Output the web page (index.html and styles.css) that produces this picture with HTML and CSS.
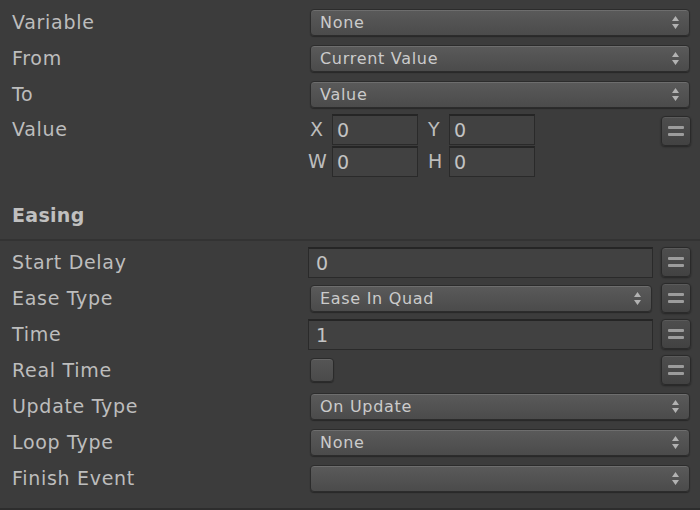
FILE: index.html
```html
<!DOCTYPE html>
<html>
<head>
<meta charset="utf-8">
<link rel="stylesheet" href="styles.css">
</head>
<body>
<div class="panel">
  <div class="rows top">
    <div class="row">
      <div class="label">Variable</div>
      <div class="popup"><span class="ptext">None</span><svg class="arrows" viewBox="0 0 7 13"><path d="M3.5 0L7 5H0Z M0 8H7L3.5 13Z"/></svg></div>
    </div>
    <div class="row">
      <div class="label">From</div>
      <div class="popup"><span class="ptext">Current Value</span><svg class="arrows" viewBox="0 0 7 13"><path d="M3.5 0L7 5H0Z M0 8H7L3.5 13Z"/></svg></div>
    </div>
    <div class="row">
      <div class="label">To</div>
      <div class="popup"><span class="ptext">Value</span><svg class="arrows" viewBox="0 0 7 13"><path d="M3.5 0L7 5H0Z M0 8H7L3.5 13Z"/></svg></div>
    </div>
    <div class="vrow">
      <div class="label vlabel">Value</div>
      <div class="vgrid">
        <span class="axis">X</span><div class="field small">0</div>
        <span class="axis">Y</span><div class="field small">0</div>
        <span class="axis">W</span><div class="field small">0</div>
        <span class="axis">H</span><div class="field small">0</div>
      </div>
      <div class="eqbtn vbtn"><i></i><i></i></div>
    </div>
  </div>
  <div class="header">Easing</div>
  <div class="rows bottom">
    <div class="row">
      <div class="label">Start Delay</div>
      <div class="field wide">0</div>
      <div class="eqbtn"><i></i><i></i></div>
    </div>
    <div class="row">
      <div class="label">Ease Type</div>
      <div class="popup short"><span class="ptext">Ease In Quad</span><svg class="arrows" viewBox="0 0 7 13"><path d="M3.5 0L7 5H0Z M0 8H7L3.5 13Z"/></svg></div>
      <div class="eqbtn"><i></i><i></i></div>
    </div>
    <div class="row">
      <div class="label">Time</div>
      <div class="field wide">1</div>
      <div class="eqbtn"><i></i><i></i></div>
    </div>
    <div class="row">
      <div class="label">Real Time</div>
      <div class="check-wrap"><div class="check"></div></div>
      <div class="eqbtn"><i></i><i></i></div>
    </div>
    <div class="row">
      <div class="label">Update Type</div>
      <div class="popup"><span class="ptext">On Update</span><svg class="arrows" viewBox="0 0 7 13"><path d="M3.5 0L7 5H0Z M0 8H7L3.5 13Z"/></svg></div>
    </div>
    <div class="row">
      <div class="label">Loop Type</div>
      <div class="popup"><span class="ptext">None</span><svg class="arrows" viewBox="0 0 7 13"><path d="M3.5 0L7 5H0Z M0 8H7L3.5 13Z"/></svg></div>
    </div>
    <div class="row">
      <div class="label">Finish Event</div>
      <div class="popup"><span class="ptext"></span><svg class="arrows" viewBox="0 0 7 13"><path d="M3.5 0L7 5H0Z M0 8H7L3.5 13Z"/></svg></div>
    </div>
  </div>
</div>
</body>
</html>
```
FILE: styles.css
```css
html, body {
  margin: 0;
  padding: 0;
  background: #3c3c3c;
}
body {
  width: 700px;
  height: 510px;
  overflow: hidden;
  font-family: "DejaVu Sans", "Liberation Sans", sans-serif;
  color: #c3c3c3;
}
.panel {
  height: 508px;
  border-bottom: 2px solid #2d2d2d;
  box-sizing: content-box;
}
.rows.top {
  padding-top: 4px;
}
.row {
  height: 36px;
  display: flex;
  align-items: center;
  padding: 0 9px 0 12px;
}
.label {
  width: 296px;
  flex: none;
  font-size: 19px;
  letter-spacing: 0.7px;
  color: #bdbdbd;
}
.popup {
  flex: 1;
  margin-left: 2px;
  margin-right: 1px;
  height: 25px;
  display: flex;
  align-items: center;
  justify-content: space-between;
  padding: 0 10px 0 9px;
  background: linear-gradient(#5a5a5a, #4b4b4b);
  border: 1px solid #2c2c2c;
  border-radius: 4px;
  box-shadow: inset 0 1px 0 rgba(255,255,255,0.12), 0 1px 1px rgba(0,0,0,0.35);
}
.popup.short {
  margin-right: 1px;
}
.ptext {
  font-size: 16px;
  letter-spacing: 0.7px;
  color: #cbcbcb;
}
.arrows {
  width: 7px;
  height: 13px;
  fill: #b2b2b2;
}
.field {
  height: 28px;
  background: #414141;
  border: 1px solid #2a2a2a;
  border-top: 2px solid #252525;
  box-sizing: content-box;
  font-size: 19px;
  color: #c3c3c3;
  display: flex;
  align-items: center;
  padding-left: 7px;
}
.field.wide {
  flex: 1;
}
.eqbtn {
  width: 28px;
  height: 28px;
  margin-left: 8px;
  flex: none;
  border: 1px solid #2a2a2a;
  border-radius: 4px;
  background: linear-gradient(#4e4e4e, #424242);
  box-shadow: inset 0 1px 0 rgba(255,255,255,0.08), 0 1px 2px rgba(0,0,0,0.4);
  display: flex;
  flex-direction: column;
  align-items: center;
  justify-content: center;
  gap: 4px;
}
.eqbtn i {
  display: block;
  width: 16px;
  height: 3px;
  border-radius: 1px;
  background: #9c9c9c;
}
.check-wrap {
  flex: 1;
  padding-left: 2px;
}
.check {
  width: 22px;
  height: 22px;
  border: 1px solid #2b2b2b;
  border-radius: 4px;
  background: linear-gradient(#555555, #4a4a4a);
  box-shadow: inset 0 1px 0 rgba(255,255,255,0.1), 0 1px 1px rgba(0,0,0,0.35);
}
.vrow {
  height: 64px;
  padding: 2px 9px 0 12px;
  display: flex;
  align-items: flex-start;
}
.vlabel {
  line-height: 31px;
}
.vgrid {
  display: grid;
  grid-template-columns: 24px 86px 31px 86px;
  grid-auto-rows: 31px;
  row-gap: 1px;
  flex: none;
}
.axis {
  font-size: 19px;
  color: #bdbdbd;
  line-height: 31px;
  padding-left: 2px;
}
.axis:nth-child(5) {
  padding-left: 0;
}
.axis:nth-child(3), .axis:nth-child(7) {
  padding-left: 10px;
}
.field.small {
  height: 28px;
  padding-left: 4px;
  box-sizing: content-box;
  width: auto;
}
.vbtn {
  margin-left: auto;
  margin-top: 2px;
}
.header {
  height: 63px;
  box-sizing: border-box;
  border-bottom: 2px solid #333333;
  display: flex;
  align-items: flex-end;
  padding: 0 0 13px 12px;
  font-size: 19px;
  font-weight: bold;
  color: #c0c0c0;
  letter-spacing: 0.3px;
}
.rows.bottom {
  padding-top: 3px;
}
```
